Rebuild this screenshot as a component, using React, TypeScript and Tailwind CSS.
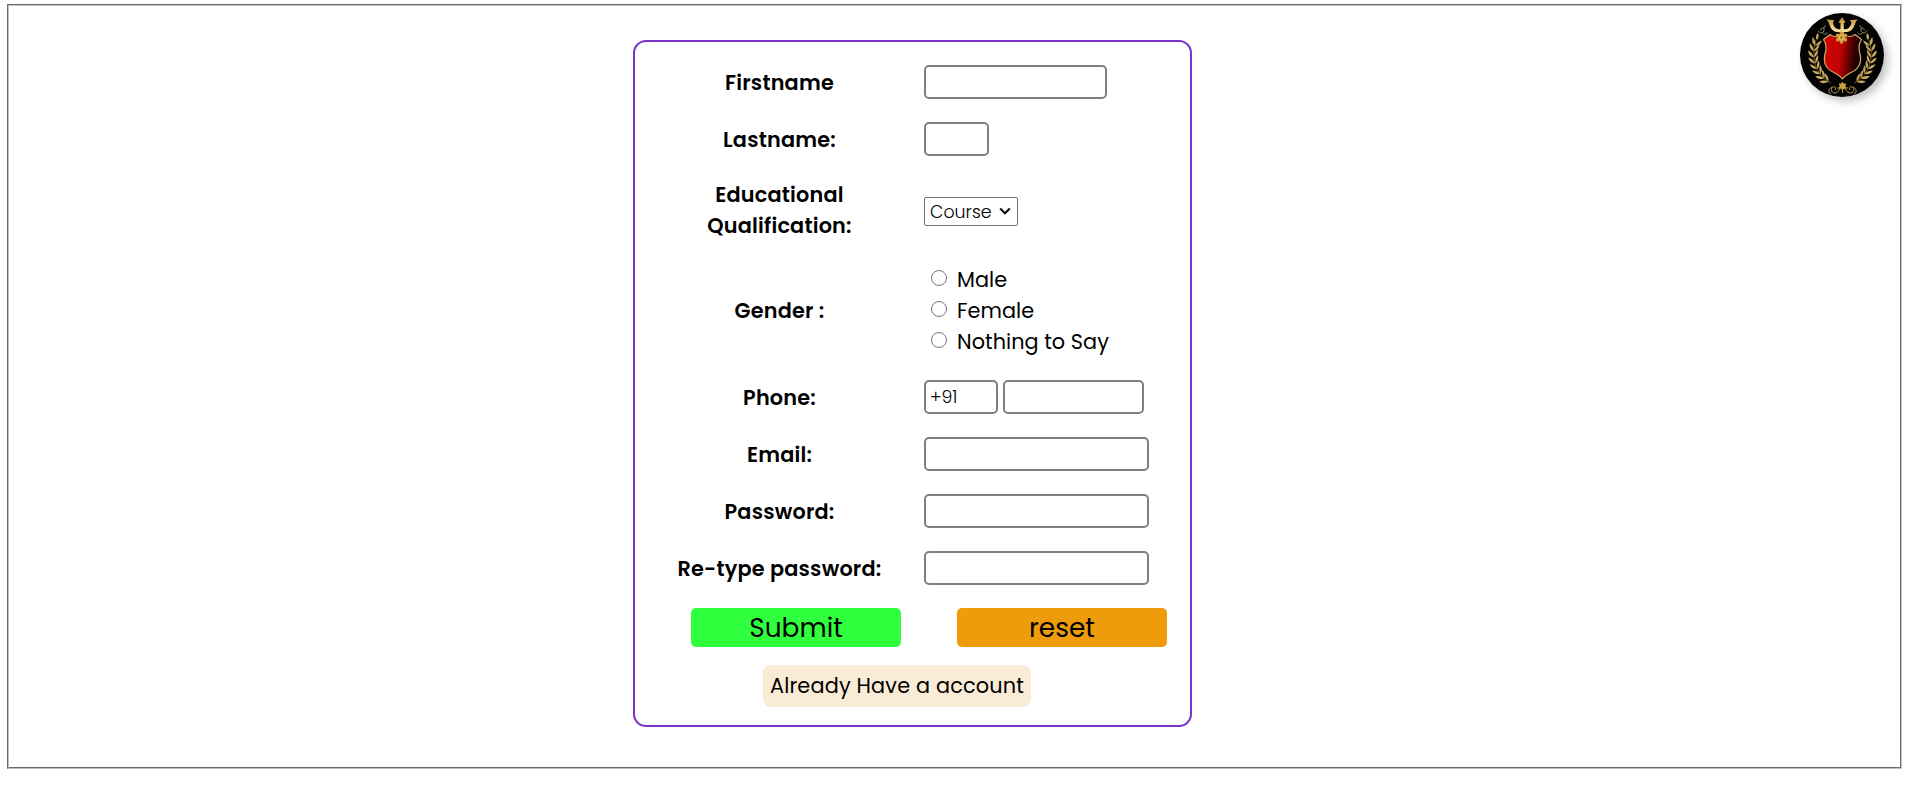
import React from "react";

type Leaf = { x: number; y: number; a: number };

// Leaves of the left laurel branch, listed from the bottom upwards.
const STEM: Leaf[] = [
  { x: 27.5, y: 68, a: -54 },
  { x: 23.5, y: 64.5, a: -44 },
  { x: 20, y: 60, a: -34 },
  { x: 17, y: 55, a: -24 },
  { x: 15, y: 49.5, a: -14 },
  { x: 13.8, y: 43.5, a: -4 },
  { x: 14, y: 37.5, a: 8 },
  { x: 15.5, y: 32, a: 20 },
];

function Branch() {
  return (
    <g>
      <path d="M31 70 C20 65 9 50 16 27" fill="none" stroke="#8f7338" strokeWidth="0.7" />
      {STEM.map((l) => (
        <g key={l.y} transform={`translate(${l.x} ${l.y}) rotate(${l.a})`} fill="#c4a55c">
          <path d="M0 1 C-4 -0.5 -5.2 -3 -5.2 -6.5 C-2.8 -5 -0.8 -3 0 1Z" />
          <path d="M0 1 C3.5 -0.5 4.6 -3 4.6 -6.5 C2.4 -5 0.6 -3 0 1Z" />
        </g>
      ))}
      <path d="M17 27 C15 24.5 16 22 18 20 C19 22.5 19 25 17 27Z" fill="#c4a55c" />
      <path
        d="M18 17.5 C19.5 21 24.5 20.5 24 16.5 C23.5 14 20 15 21 17.5 M22 19 C24 22 26.5 21.5 27.5 19.5 M24 16 C23.5 14 24.5 12.8 26 13"
        fill="none"
        stroke="#a09468"
        strokeWidth="0.9"
      />
      <path
        d="M40 75 C37 83 30 80 31.5 75.5 C33 72 37 74 35 77 M32 74 C28 76 28 80 31 80.5"
        fill="none"
        stroke="#c4a55c"
        strokeWidth="0.9"
      />
    </g>
  );
}

function Flower({ x, y, s }: { x: number; y: number; s: number }) {
  return (
    <g transform={`translate(${x} ${y}) scale(${s})`}>
      {[0, 60, 120, 180, 240, 300].map((a) => (
        <ellipse key={a} cx="0" cy="-3.9" rx="1.9" ry="2.4" transform={`rotate(${a})`} fill="#c99a35" />
      ))}
      <circle r="3.2" fill="#dcb659" />
      <circle r="1.3" fill="#9b7423" />
    </g>
  );
}

function Crest() {
  return (
    <svg viewBox="0 0 84 84" className="block size-full" aria-hidden="true">
      <defs>
        <linearGradient id="shield" x1="0" y1="0" x2="1" y2="0.12">
          <stop offset="0" stopColor="#d00202" />
          <stop offset="0.5" stopColor="#c00303" />
          <stop offset="0.85" stopColor="#300000" />
          <stop offset="1" stopColor="#160000" />
        </linearGradient>
        <linearGradient id="gold" x1="0" y1="0" x2="0" y2="1">
          <stop offset="0" stopColor="#b9802c" />
          <stop offset="0.55" stopColor="#e6c675" />
          <stop offset="1" stopColor="#fff0b0" />
        </linearGradient>
      </defs>
      <circle cx="42" cy="42" r="42" fill="#020202" />
      <Branch />
      <g transform="translate(85 0) scale(-1 1)">
        <Branch />
      </g>
      <path
        d="M30 21.5 C33 24 38 24 42.5 21 C47 24 52 24 55 21.5 L61.5 26.5 C58.5 31 58 35 60 41 C62 50 58 56 52 59 C48 61 44.5 63 42.5 66 C40.5 63 37 61 33 59 C26.5 56 23 50 25 41 C27 35 26.5 31 23.5 26.5 Z"
        fill="url(#shield)"
        stroke="#c9a45c"
        strokeWidth="1.3"
        strokeLinejoin="round"
      />
      <path
        d="M26 6.5 L34 7 L33 10 C34 15 37 17 40.5 16 L40.5 10 L38.5 9.5 L42 4 L45.5 9.5 L43.8 10 L43.8 16 C47 17 50 15 51.5 10 L50 7 L58 6.5 C54.5 9 55 14 51 17.5 C48 19.5 45 19 43.8 19 L43.8 21 L40.5 21 L40.5 19 C38 19.5 35 19 32.5 17 C29 14 30 9 26 6.5Z"
        fill="url(#gold)"
      />
      <Flower x={41.5} y={24.5} s={1} />
      <Flower x={42.5} y={73} s={0.65} />
      <path d="M42.5 76 L42.5 80 M37 75 L48 75" stroke="#c99a35" strokeWidth="0.9" />
    </svg>
  );
}

const field = "h-[34px] rounded-[5px] border-2 border-[#808080] bg-white pl-[4px] outline-none";

function Row({ label, children, height = "h-[34px]" }: { label: React.ReactNode; children: React.ReactNode; height?: string }) {
  return (
    <div className={`flex items-center ${height}`}>
      <div className="w-[289px] shrink-0 text-center text-[20.8px] leading-[31px] font-semibold tracking-[0.2px] whitespace-nowrap">
        {label}
      </div>
      {children}
    </div>
  );
}

function Choice({ children }: { children: React.ReactNode }) {
  return (
    <label className="flex h-[31px] items-center gap-[10px] pl-[7px] text-[20.8px] leading-[31px] tracking-[0.05px]">
      <input
        type="radio"
        name="gender"
        className="mb-[3px] size-[16px] appearance-none rounded-full border border-[#767676] bg-white"
      />
      {children}
    </label>
  );
}

export default function App() {
  return (
    <div className="bg-white pt-[4px] pl-[7px] font-['Poppins','Inter',sans-serif] text-black">
      <div className="flex h-[765px] w-[1895px] items-start border-2 border-[#c0c0c0] [border-style:groove]">
        <form className="mt-[34px] ml-[624px] flex h-[687px] w-[559px] flex-col gap-[23px] rounded-[13px] border-2 border-[#7d32c8] pt-[23px]">
          <Row label="Firstname">
            <input type="text" className={`${field} w-[183px]`} />
          </Row>
          <Row label="Lastname:">
            <input type="text" className={`${field} w-[65px]`} />
          </Row>
          <Row
            height="h-[64px] shrink-0"
            label={
              <div className="pb-[2px]">
                Educational
                <br />
                Qualification:
              </div>
            }
          >
            <button
              type="button"
              className="mt-[1px] flex h-[29px] w-[94px] items-center justify-between rounded-[2px] border border-[#767676] bg-white pr-[6px] pl-[5px] text-[17.4px] leading-[27px] font-light"
            >
              <span className="pt-[1px]">Course</span>
              <svg width="12" height="9" viewBox="0 0 12 9" fill="none" stroke="#111" strokeWidth="2.2">
                <path d="M1.2 1.5 L6 6.3 L10.8 1.5" />
              </svg>
            </button>
          </Row>
          <Row height="h-[91px] shrink-0" label={<div className="pb-[2px]">Gender :</div>}>
            <div className="pb-[2px]">
              <Choice>Male</Choice>
              <Choice>Female</Choice>
              <Choice>Nothing to Say</Choice>
            </div>
          </Row>
          <Row label="Phone:">
            <input type="text" defaultValue="+91" className={`${field} w-[74px] text-[17.4px] font-light`} />
            <input type="text" className={`${field} ml-[5px] w-[141px]`} />
          </Row>
          <Row label="Email:">
            <input type="text" className={`${field} w-[225px]`} />
          </Row>
          <Row label="Password:">
            <input type="password" className={`${field} w-[225px]`} />
          </Row>
          <Row label="Re-type password:">
            <input type="password" className={`${field} w-[225px]`} />
          </Row>
          <div className="flex h-[39px] gap-[56px] pl-[56px] text-[26.4px] leading-[39px]">
            <button type="button" className="w-[210px] rounded-[5px] bg-[#30ff3e]">Submit</button>
            <button type="button" className="w-[210px] rounded-[5px] bg-[#ee9b0c]">reset</button>
          </div>
          <button
            type="button"
            className="mt-[-5px] ml-[128px] h-[42px] w-[268px] shrink-0 rounded-[8px] bg-[#faebd7] text-[20.8px] leading-[42px] tracking-[0.18px] whitespace-nowrap"
          >
            Already Have a account
          </button>
        </form>
        <div className="mt-[7px] mr-[16px] ml-auto size-[84px] rounded-full shadow-[4px_4px_8px_rgba(0,0,0,0.25)]">
          <Crest />
        </div>
      </div>
    </div>
  );
}
